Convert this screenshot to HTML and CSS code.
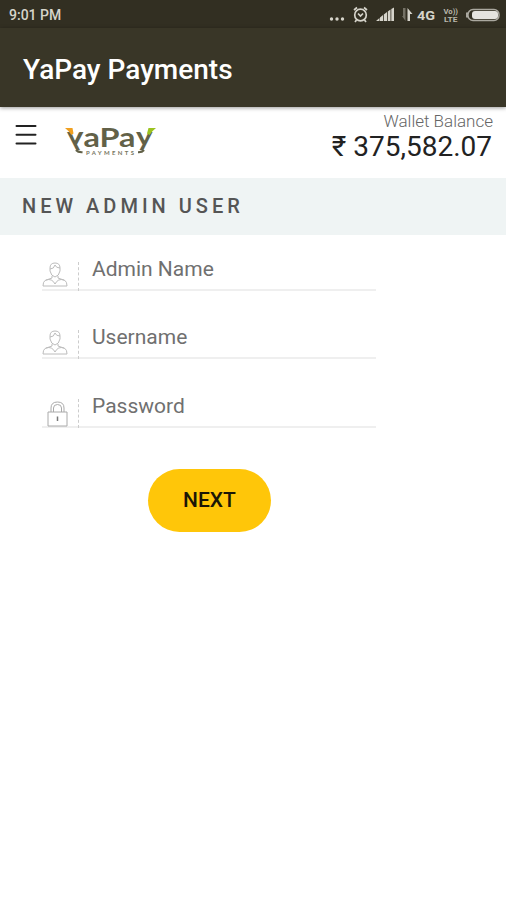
FILE: index.html
```html
<!DOCTYPE html>
<html lang="en">
<head>
<meta charset="utf-8">
<title>YaPay Payments</title>
<link rel="stylesheet" href="styles.css">
</head>
<body>
<div class="status">
  <span class="time">9:01 PM</span>
  <svg class="status-icons" width="176" height="28" viewBox="0 0 176 28">
    <g fill="#d6d4cb">
      <circle cx="1.500" cy="19" r="1.700"/><circle cx="7" cy="19" r="1.700"/><circle cx="12.500" cy="19" r="1.700"/>
      <path d="M46 21L49.500 18V21ZM50 21V17.500L53 15V21ZM53.800 21V14.500L57 12V21ZM57.800 21V11.500L60.500 9.500V21ZM61.300 21V9L64 7.500V21Z"/>
      <path d="M77.500 21V8L82.500 14H80V21Z"/>
      <path d="M73 8H75.500V21L72 16H73Z" opacity=".4"/>
    </g>
    <g fill="none" stroke="#d6d4cb" stroke-width="1.7">
      <circle cx="30.500" cy="15" r="5.800"/>
      <path d="M24 10L27 7.500M37 10L34 7.500M28 13.500L30.500 16L33 13.500M26.500 20L25 22M34.500 20L36 22"/>
    </g>
    <text class="network" x="87" y="20" textLength="18" lengthAdjust="spacingAndGlyphs">4G</text>
    <text class="volte" x="113.500" y="14" textLength="14.500" lengthAdjust="spacingAndGlyphs">Vo))</text>
    <text class="volte" x="114" y="21.500" textLength="13.500" lengthAdjust="spacingAndGlyphs">LTE</text>
    <rect x="138" y="9.500" width="31" height="11" rx="5" fill="none" stroke="#aaa89f" stroke-width="1.500"/>
    <rect x="142" y="11" width="26" height="8" rx="3" fill="#e5e4df"/>
    <rect x="136" y="12.500" width="2" height="5" fill="#aaa89f"/>
  </svg>
</div>
<header class="appbar"><h1>YaPay Payments</h1></header>
<div class="toolbar">
  <svg class="menu" width="22" height="22" viewBox="0 0 22 22"><path d="M1.500 2H20.500M1.500 10.800H20.500M1.500 19.500H20.500" stroke="#222" stroke-width="2" stroke-linecap="round"/></svg>
  <svg class="logo" width="94" height="36" viewBox="0 0 94 36">
    <text class="brand" transform="translate(19.500 20.800) scale(-1 1)" textLength="16.500" lengthAdjust="spacingAndGlyphs">y</text>
    <text class="brand" x="19.500" y="21.500" textLength="52" lengthAdjust="spacingAndGlyphs">aPa</text>
    <text class="brand" x="72" y="20.800" textLength="16.500" lengthAdjust="spacingAndGlyphs">y</text>
    <path d="M12 25Q14 27.500 18.500 27.200M80 25Q78 27.500 74 27.200" fill="none" stroke="#626148" stroke-width="2.200"/>
    <path d="M1 3H8.500L9.500 8.500L7.500 10Q5 6 1 3Z" fill="#f0a020"/>
    <path d="M92 3H84.500L83 8.500L85.500 10Q88 6 92 3Z" fill="#9bc31f"/>
    <text class="tagline" x="22" y="30" textLength="48">PAYMENTS</text>
  </svg>
  <div class="wallet">
    <span class="wallet-label">Wallet Balance</span>
    <span class="amount">₹ 375,582.07</span>
  </div>
</div>
<h2 class="section">NEW ADMIN USER</h2>
<form class="form">
  <div class="field">
    <svg class="icon" width="26" height="26" viewBox="0 0 26 26"><path d="M8 6Q8 1 13 1Q18 1 18 6V9Q17 14 13 15Q9 14 8 9ZM8 7Q12 7 13 3Q14 6 18 6M10 14V16M16 14V16M10 16L3 18.500Q1 20 1 24H25Q25 20 23 18.500L16 16M4 18Q10 16 13 22Q16 16 22 18"/></svg>
    <span class="divider"></span><span class="placeholder">Admin Name</span>
  </div>
  <div class="field">
    <svg class="icon" width="26" height="26" viewBox="0 0 26 26"><path d="M8 6Q8 1 13 1Q18 1 18 6V9Q17 14 13 15Q9 14 8 9ZM8 7Q12 7 13 3Q14 6 18 6M10 14V16M16 14V16M10 16L3 18.500Q1 20 1 24H25Q25 20 23 18.500L16 16M4 18Q10 16 13 22Q16 16 22 18"/></svg>
    <span class="divider"></span><span class="placeholder">Username</span>
  </div>
  <div class="field">
    <svg class="icon lock" width="26" height="26" viewBox="0 0 26 26"><path d="M6 11H25V25H6ZM9 11V7Q9 1 15.500 1Q22 1 22 7V11M11.500 11V7Q11.500 3.500 15.500 3.500Q19.500 3.500 19.500 7V11"/><path class="keyhole" d="M15.500 15.500V20"/></svg>
    <span class="divider"></span><span class="placeholder">Password</span>
  </div>
  <button class="next" type="button">NEXT</button>
</form>
</body>
</html>
```
FILE: styles.css
```css
* { box-sizing: border-box; }
body { margin: 0; background: #fff; font-family: Roboto, "Liberation Sans", sans-serif; }
.status { height: 28px; background: #322f22; display: flex; justify-content: space-between; padding-left: 9px; }
.time { color: #d6d4cb; font-size: 14px; font-weight: 500; line-height: 30px; }
.status-icons { display: block; overflow: visible; }
.network { font: 700 13.5px Roboto, sans-serif; fill: #d6d4cb; }
.volte { font: 700 8px Roboto, sans-serif; fill: #b9b7ad; }
.appbar { height: 79px; background: #393627; padding-left: 23px; box-shadow: 0 1px 4px rgba(0, 0, 0, .4); }
h1 { margin: 0; color: #fff; font-size: 28px; font-weight: 500; line-height: 84px; white-space: nowrap; }
.toolbar { height: 71px; display: flex; align-items: flex-start; padding: 0 13px 0 15px; }
.menu { margin-top: 17px; }
.logo { margin: 18px 0 0 27px; overflow: visible; }
.brand { font: 700 27.5px Lato, sans-serif; fill: #626148; }
.tagline { font: 700 6px Lato, sans-serif; fill: #77765f; }
.wallet { margin-left: auto; padding-top: 4px; display: flex; flex-direction: column; align-items: flex-end; white-space: nowrap; }
.wallet-label { font-size: 17px; font-weight: 300; line-height: 20px; color: #666; }
.amount { font-size: 28px; font-weight: 400; line-height: 31px; margin-right: 1px; color: #222; }
.section { height: 57px; margin: 0; padding-left: 22px; background: #eff4f4; color: #555; font-size: 20px; font-weight: 500; line-height: 56px; letter-spacing: 4px; white-space: nowrap; }
.form { padding: 12px 0 0 42px; }
.field { width: 334px; height: 44px; margin-bottom: 24.3px; border-bottom: 2px solid #efefef; display: flex; }
.icon { margin-top: 15px; fill: none; stroke: #bcbcbc; stroke-width: 1; }
.lock { margin-top: 17px; stroke: #aaa; }
.keyhole { stroke: #777; stroke-width: 1.5; }
.divider { width: 0; height: 29px; margin: 15px 13px 0 10px; border-left: 1px dashed #ccc; }
.placeholder { color: #707070; font-size: 21px; line-height: 44px; }
.next { display: block; width: 123px; height: 63px; margin: 41.4px 0 0 106px; padding: 0; border: 0; border-radius: 32px; background: #ffc609; color: #1b1606; font: 500 21px Roboto, sans-serif; }
```
